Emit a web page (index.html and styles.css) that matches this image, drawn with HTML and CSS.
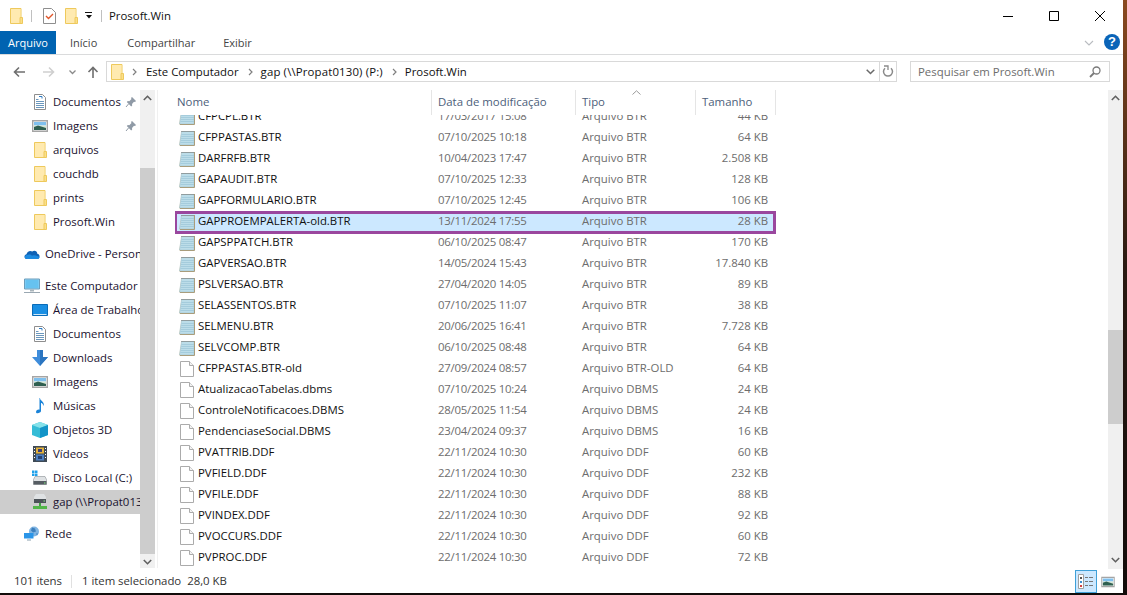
FILE: index.html
```html
<!DOCTYPE html>
<html lang="pt-BR">
<head>
<meta charset="utf-8">
<title>Prosoft.Win</title>
<link rel="stylesheet" href="styles.css">
</head>
<body>
<svg class="defs" width="0" height="0" aria-hidden="true">
  <symbol id="folder" viewBox="0 0 16 16"><path d="M2.500.5h10.500v15H2.500z" fill="#ffe69a" stroke="#eec95c"/><path d="M3 1h9.500v14H3z" fill="#ffeab0"/><path d="M12 9.500h2.500v6H12z" fill="#fbdf88" stroke="#eec95c"/></symbol>
  <symbol id="doc" viewBox="0 0 16 16"><path d="M2.500.5h8l3 3v12h-11z" fill="#fff" stroke="#8e8e8e"/><path d="M4 5.500h2.500M4 7.500h8M4 9.500h8M4 11.500h8M4 13.500h8" stroke="#6a97bd"/><path d="M7 2.500h3v2" fill="none" stroke="#2f7cc4"/></symbol>
  <symbol id="pics" viewBox="0 0 16 14"><path d="M.7 1.700h14.600v10.600H.7z" fill="#fff" stroke="#a5a5a5" stroke-width="1.400"/><path d="M2 3h12v3.500H2z" fill="#7fc0ee"/><path d="M2 6.500h12V11H2z" fill="#d5e6d4"/><path d="M2 8l4-1.500 8 2.500V11H2z" fill="#2f5f50"/></symbol>
  <symbol id="pin" viewBox="0 0 12 12"><path d="M7 1l4 4-1 1-1-.2L7 8l.2 1.500-1 1L1.800 6l1-1 1.500.2L6.500 3 6 2z" fill="#8f9aa6"/><path d="M3.500 8L1 11" stroke="#8f9aa6"/></symbol>
  <symbol id="cloud" viewBox="0 0 16 11"><path d="M3 10.500c-3 0-3.500-4-.5-4.700C3 3 6 1.500 8.300 3c2-1.500 5-.5 5 2.200 3 .3 3 5.300 0 5.300z" fill="#0f62b5"/><path d="M3 10.500c-3 0-3-3.500 0-4 2-1 4-.5 5 .8 2-.7 3.500-.5 5 .2 3 0 3 3 .5 3z" fill="#1c8ae0"/></symbol>
  <symbol id="pc" viewBox="0 0 16 15"><path d="M.5.500h15v10H.5z" fill="#8ed3f7" stroke="#6b9dbb"/><path d="M1.500 1.500h13v8h-13z" fill="#66c2f0"/><path d="M6 11h4v2H6z" fill="#a9b4bb"/><path d="M0 13.500h16v1H0z" fill="#9aa8b2"/></symbol>
  <symbol id="desk" viewBox="0 0 16 12"><path d="M.5.500h15v11H.5z" fill="#1a8fe3" stroke="#0a6cb8"/><path d="M1.500 10.500h13" stroke="#cfe8f8"/></symbol>
  <symbol id="down" viewBox="0 0 16 16"><path d="M5 0h6v7h5l-8 9-8-9h5z" fill="#3f8ddb"/><path d="M8 0h3v7h5l-8 9z" fill="#2b75c0"/></symbol>
  <symbol id="music" viewBox="0 0 12 16"><path d="M6 0c0 3 5 3.500 3.500 8C9 5.500 7.500 5 7 5v8c0 2-5 3.500-5 1 0-2 2.500-2.800 3.500-2.300V0z" fill="#1a83d8"/></symbol>
  <symbol id="cube" viewBox="0 0 16 16"><path d="M8 0l8 3v10l-8 3-8-3V3z" fill="#35bcd6"/><path d="M8 0l8 3-8 3-8-3z" fill="#86e2ea"/><path d="M8 6l8-3v10l-8 3z" fill="#1294c8"/></symbol>
  <symbol id="film" viewBox="0 0 14 16"><path d="M0 0h14v16H0z" fill="#3f4a55"/><path d="M3 1.500h8v6H3z" fill="#e3b23c"/><path d="M3 8.500h8v6H3z" fill="#4d7fc0"/><path d="M5 3h4v3H5z" fill="#3a3f78"/><path d="M5 10h4v3H5z" fill="#23406f"/><path d="M1 2h1v1H1zM1 5h1v1H1zM1 8h1v1H1zM1 11h1v1H1zM12 2h1v1h-1zM12 5h1v1h-1zM12 8h1v1h-1zM12 11h1v1h-1z" fill="#fff"/></symbol>
  <symbol id="disk" viewBox="0 0 16 15"><path d="M1.500 9L3 6h10l1.500 3v5h-13z" fill="#dfe2e4" stroke="#8a9096" stroke-width=".6"/><path d="M1.500 10.500h13V14h-13z" fill="#565d63"/><path d="M12 12h1.500v1H12z" fill="#7fe37f"/><path d="M0 0h2.500v2.500H0zM3 0h2.500v2.500H3zM0 3h2.500v2.500H0zM3 3h2.500v2.500H3z" fill="#1fa0ea"/></symbol>
  <symbol id="net" viewBox="0 0 16 16"><path d="M2 3l2-3h8l2 3v6H2z" fill="#dfe2e4"/><path d="M2 5h12v4H2z" fill="#4c5358"/><path d="M11.500 6.500H13v1h-1.500z" fill="#7fe37f"/><path d="M7 9h2v3H7z" fill="#3fa640"/><path d="M1 12h14v3H1z" fill="#52b648"/></symbol>
  <symbol id="globe" viewBox="0 0 16 15"><circle cx="10" cy="5" r="5" fill="#7fb4e2"/><path d="M8 1l3 1 1 3-3 1-2-2zM12 7l2 0-1 2z" fill="#3d7fbd"/><path d="M0 6.500h9.500V12H0z" fill="#2a95e8"/><path d="M3 13.500h4" stroke="#8aa0ae"/></symbol>
  <symbol id="btr" viewBox="0 0 16 16"><path d="M2.500 1.500h13V15.500H0z" fill="#e8d9b8"/><path d="M2.500 1.500H15V15H.5z" fill="#bcdde9" stroke="#9dbcc8" stroke-width=".5"/><path d="M2.500 4.500H15M2.200 6.500H15M2 8.500H15M1.800 10.500H15M1.500 12.500H15" stroke="#9fc8d8" stroke-width=".8"/><path d="M2.500 1.500h12.500" stroke="#666" stroke-dasharray="1 1"/><path d="M15.500 1v14.500H1" fill="none" stroke="#a99d7c"/></symbol>
  <symbol id="blank" viewBox="0 0 14 16"><path d="M.5.500h9l4 4v11H.5z" fill="#fff" stroke="#ababab"/><path d="M9.500.500v4h4" fill="#f3f3f3" stroke="#ababab"/></symbol>
</svg>
<div class="window">
  <header class="titlebar">
    <svg class="ic16 qa-first"><use href="#folder"/></svg>
    <span class="qa-sep"></span>
    <svg class="qa-check" viewBox="0 0 13 16"><path d="M.5.500h8l4 4v11H.5z" fill="#fff" stroke="#8e8e8e"/><path d="M3 8l2.500 2.500L10 6" fill="none" stroke="#e0562a" stroke-width="1.400"/></svg>
    <svg class="ic16 qa-folder"><use href="#folder"/></svg>
    <svg class="qa-down" viewBox="0 0 8 7"><path d="M0 0h7v1H0z" fill="#111"/><path d="M1 3h6L4 6.500z" fill="#111"/></svg>
    <span class="qa-sep"></span>
    <span class="title">Prosoft.Win</span>
    <div class="caption">
      <span class="cap-btn"><svg width="10" height="10" viewBox="0 0 10 10"><path d="M0 5.500h10" stroke="#000"/></svg></span>
      <span class="cap-btn"><svg width="10" height="10" viewBox="0 0 10 10"><path d="M.5.500h9v9h-9z" fill="none" stroke="#000"/></svg></span>
      <span class="cap-btn"><svg width="10" height="10" viewBox="0 0 10 10"><path d="M0 0l10 10M10 0L0 10" stroke="#000"/></svg></span>
    </div>
  </header>
  <nav class="ribbon">
    <span class="tab tab-file">Arquivo</span>
    <span class="tab tab-inicio">Início</span>
    <span class="tab tab-comp">Compartilhar</span>
    <span class="tab tab-exibir">Exibir</span>
    <svg class="rib-chev" viewBox="0 0 10 6"><path d="M1 1l4 4 4-4" fill="none" stroke="#b9bcc0" stroke-width="1.100"/></svg>
    <span class="help">?</span>
  </nav>
  <div class="addressbar">
    <svg class="nav-arrow back" viewBox="0 0 12 12"><path d="M12 6H2M6 1.500L1.500 6 6 10.500" fill="none" stroke="#6f6f6f" stroke-width="1.600"/></svg>
    <svg class="nav-arrow fwd" viewBox="0 0 12 12"><path d="M0 6h10M6 1.500L10.500 6 6 10.500" fill="none" stroke="#cfcfcf" stroke-width="1.600"/></svg>
    <svg class="nav-chev" viewBox="0 0 7 5"><path d="M.5.500L3.500 3.500 6.500.5" fill="none" stroke="#8a8a8a" stroke-width="1.300"/></svg>
    <svg class="nav-arrow up" viewBox="0 0 12 12"><path d="M6 12V2M1.500 6L6 1.500 10.500 6" fill="none" stroke="#6f6f6f" stroke-width="1.600"/></svg>
    <div class="path">
      <svg class="ic16 path-folder"><use href="#folder"/></svg>
      <svg class="crumb-sep first-sep" viewBox="0 0 5 8"><path d="M1 1l3 3-3 3" fill="none" stroke="#808080" stroke-width="1.200"/></svg>
      <span class="crumb">Este Computador</span>
      <svg class="crumb-sep" viewBox="0 0 5 8"><path d="M1 1l3 3-3 3" fill="none" stroke="#808080" stroke-width="1.200"/></svg>
      <span class="crumb crumb-gap">gap (\\Propat0130) (P:)</span>
      <svg class="crumb-sep" viewBox="0 0 5 8"><path d="M1 1l3 3-3 3" fill="none" stroke="#808080" stroke-width="1.200"/></svg>
      <span class="crumb">Prosoft.Win</span>
      <svg class="path-drop" viewBox="0 0 9 6"><path d="M.7.700L4.500 4.500 8.300.7" fill="none" stroke="#6a6a6a" stroke-width="1.500"/></svg>
      <span class="refresh"><svg width="12" height="13" viewBox="0 0 12 13"><path d="M9 3.200A4.500 4.500 0 1 1 3 3.200" fill="none" stroke="#8a8a8a" stroke-width="1.500"/><path d="M2 1h4v4" fill="none" stroke="#8a8a8a" stroke-width="1.300"/></svg></span>
    </div>
    <div class="search">
      <span class="search-text">Pesquisar em Prosoft.Win</span>
      <svg class="search-ic" viewBox="0 0 12 12"><circle cx="7.500" cy="4.500" r="3.500" fill="none" stroke="#7a7a7a" stroke-width="1.300"/><path d="M5 7l-4 4" stroke="#7a7a7a" stroke-width="1.800"/></svg>
    </div>
  </div>
  <div class="content">
    <aside class="sidebar">
      <ul class="tree">
        <li class="node child"><svg class="ic16"><use href="#doc"/></svg><span class="label">Documentos</span><svg class="pin"><use href="#pin"/></svg></li>
        <li class="node child"><svg class="ic16"><use href="#pics"/></svg><span class="label">Imagens</span><svg class="pin"><use href="#pin"/></svg></li>
        <li class="node child"><svg class="ic16"><use href="#folder"/></svg><span class="label">arquivos</span></li>
        <li class="node child"><svg class="ic16"><use href="#folder"/></svg><span class="label">couchdb</span></li>
        <li class="node child"><svg class="ic16"><use href="#folder"/></svg><span class="label">prints</span></li>
        <li class="node child"><svg class="ic16"><use href="#folder"/></svg><span class="label">Prosoft.Win</span></li>
      </ul>
      <ul class="tree">
        <li class="node root"><svg class="ic16"><use href="#cloud"/></svg><span class="label">OneDrive - Personal</span></li>
      </ul>
      <ul class="tree">
        <li class="node root"><svg class="ic16"><use href="#pc"/></svg><span class="label">Este Computador</span></li>
        <li class="node child"><svg class="ic16"><use href="#desk"/></svg><span class="label">Área de Trabalho</span></li>
        <li class="node child"><svg class="ic16"><use href="#doc"/></svg><span class="label">Documentos</span></li>
        <li class="node child"><svg class="ic16"><use href="#down"/></svg><span class="label">Downloads</span></li>
        <li class="node child"><svg class="ic16"><use href="#pics"/></svg><span class="label">Imagens</span></li>
        <li class="node child"><svg class="ic16"><use href="#music"/></svg><span class="label">Músicas</span></li>
        <li class="node child"><svg class="ic16"><use href="#cube"/></svg><span class="label">Objetos 3D</span></li>
        <li class="node child"><svg class="ic16"><use href="#film"/></svg><span class="label">Vídeos</span></li>
        <li class="node child"><svg class="ic16"><use href="#disk"/></svg><span class="label">Disco Local (C:)</span></li>
        <li class="node child current"><svg class="ic16"><use href="#net"/></svg><span class="label">gap (\\Propat0130) (P:)</span></li>
      </ul>
      <ul class="tree">
        <li class="node root"><svg class="ic16"><use href="#globe"/></svg><span class="label">Rede</span></li>
      </ul>
    </aside>
    <div class="scrollbar side-scroll">
      <svg class="sb-arrow" viewBox="0 0 9 6"><path d="M.8 5L4.500 1.300 8.200 5" fill="none" stroke="#606060" stroke-width="1.600"/></svg>
      <div class="sb-track side-track"><div class="sb-thumb"></div></div>
      <svg class="sb-arrow" viewBox="0 0 9 6"><path d="M.8 1L4.500 4.700 8.200 1" fill="none" stroke="#606060" stroke-width="1.600"/></svg>
    </div>
    <div class="pane-divider"></div>
    <main class="files">
      <div class="head">
        <span class="hcell">Nome</span>
        <span class="hcell">Data de modificação</span>
        <span class="hcell sorted">Tipo<svg class="sort" viewBox="0 0 9 5"><path d="M.5 4.500L4.500.8 8.500 4.500" fill="none" stroke="#9a9a9a"/></svg></span>
        <span class="hcell">Tamanho</span>
      </div>
      <div class="list">
        <div class="rows">
          <div class="row"><span class="name"><svg class="ic16"><use href="#btr"/></svg>CFPCPL.BTR</span><span class="date">17/03/2017 15:08</span><span>Arquivo BTR</span><span class="size">44 KB</span></div>
          <div class="row"><span class="name"><svg class="ic16"><use href="#btr"/></svg>CFPPASTAS.BTR</span><span class="date">07/10/2025 10:18</span><span>Arquivo BTR</span><span class="size">64 KB</span></div>
          <div class="row"><span class="name"><svg class="ic16"><use href="#btr"/></svg>DARFRFB.BTR</span><span class="date">10/04/2023 17:47</span><span>Arquivo BTR</span><span class="size">2.508 KB</span></div>
          <div class="row"><span class="name"><svg class="ic16"><use href="#btr"/></svg>GAPAUDIT.BTR</span><span class="date">07/10/2025 12:33</span><span>Arquivo BTR</span><span class="size">128 KB</span></div>
          <div class="row"><span class="name"><svg class="ic16"><use href="#btr"/></svg>GAPFORMULARIO.BTR</span><span class="date">07/10/2025 12:45</span><span>Arquivo BTR</span><span class="size">106 KB</span></div>
          <div class="row selected"><span class="name"><svg class="ic16"><use href="#btr"/></svg>GAPPROEMPALERTA-old.BTR</span><span class="date">13/11/2024 17:55</span><span>Arquivo BTR</span><span class="size">28 KB</span></div>
          <div class="row"><span class="name"><svg class="ic16"><use href="#btr"/></svg>GAPSPPATCH.BTR</span><span class="date">06/10/2025 08:47</span><span>Arquivo BTR</span><span class="size">170 KB</span></div>
          <div class="row"><span class="name"><svg class="ic16"><use href="#btr"/></svg>GAPVERSAO.BTR</span><span class="date">14/05/2024 15:43</span><span>Arquivo BTR</span><span class="size">17.840 KB</span></div>
          <div class="row"><span class="name"><svg class="ic16"><use href="#btr"/></svg>PSLVERSAO.BTR</span><span class="date">27/04/2020 14:05</span><span>Arquivo BTR</span><span class="size">89 KB</span></div>
          <div class="row"><span class="name"><svg class="ic16"><use href="#btr"/></svg>SELASSENTOS.BTR</span><span class="date">07/10/2025 11:07</span><span>Arquivo BTR</span><span class="size">38 KB</span></div>
          <div class="row"><span class="name"><svg class="ic16"><use href="#btr"/></svg>SELMENU.BTR</span><span class="date">20/06/2025 16:41</span><span>Arquivo BTR</span><span class="size">7.728 KB</span></div>
          <div class="row"><span class="name"><svg class="ic16"><use href="#btr"/></svg>SELVCOMP.BTR</span><span class="date">06/10/2025 08:48</span><span>Arquivo BTR</span><span class="size">64 KB</span></div>
          <div class="row"><span class="name"><svg class="ic16"><use href="#blank"/></svg>CFPPASTAS.BTR-old</span><span class="date">27/09/2024 08:57</span><span>Arquivo BTR-OLD</span><span class="size">64 KB</span></div>
          <div class="row"><span class="name"><svg class="ic16"><use href="#blank"/></svg>AtualizacaoTabelas.dbms</span><span class="date">07/10/2025 10:24</span><span>Arquivo DBMS</span><span class="size">24 KB</span></div>
          <div class="row"><span class="name"><svg class="ic16"><use href="#blank"/></svg>ControleNotificacoes.DBMS</span><span class="date">28/05/2025 11:54</span><span>Arquivo DBMS</span><span class="size">24 KB</span></div>
          <div class="row"><span class="name"><svg class="ic16"><use href="#blank"/></svg>PendenciaseSocial.DBMS</span><span class="date">23/04/2024 09:37</span><span>Arquivo DBMS</span><span class="size">16 KB</span></div>
          <div class="row"><span class="name"><svg class="ic16"><use href="#blank"/></svg>PVATTRIB.DDF</span><span class="date">22/11/2024 10:30</span><span>Arquivo DDF</span><span class="size">60 KB</span></div>
          <div class="row"><span class="name"><svg class="ic16"><use href="#blank"/></svg>PVFIELD.DDF</span><span class="date">22/11/2024 10:30</span><span>Arquivo DDF</span><span class="size">232 KB</span></div>
          <div class="row"><span class="name"><svg class="ic16"><use href="#blank"/></svg>PVFILE.DDF</span><span class="date">22/11/2024 10:30</span><span>Arquivo DDF</span><span class="size">88 KB</span></div>
          <div class="row"><span class="name"><svg class="ic16"><use href="#blank"/></svg>PVINDEX.DDF</span><span class="date">22/11/2024 10:30</span><span>Arquivo DDF</span><span class="size">92 KB</span></div>
          <div class="row"><span class="name"><svg class="ic16"><use href="#blank"/></svg>PVOCCURS.DDF</span><span class="date">22/11/2024 10:30</span><span>Arquivo DDF</span><span class="size">60 KB</span></div>
          <div class="row"><span class="name"><svg class="ic16"><use href="#blank"/></svg>PVPROC.DDF</span><span class="date">22/11/2024 10:30</span><span>Arquivo DDF</span><span class="size">72 KB</span></div>
        </div>
      </div>
    </main>
    <div class="scrollbar main-scroll">
      <svg class="sb-arrow" viewBox="0 0 9 6"><path d="M.8 5L4.500 1.300 8.200 5" fill="none" stroke="#606060" stroke-width="1.600"/></svg>
      <div class="sb-track main-track"><div class="sb-thumb"></div></div>
      <svg class="sb-arrow" viewBox="0 0 9 6"><path d="M.8 1L4.500 4.700 8.200 1" fill="none" stroke="#606060" stroke-width="1.600"/></svg>
    </div>
  </div>
  <footer class="status">
    <span class="st-text st-count">101 itens</span>
    <span class="st-sep"></span>
    <span class="st-text st-sel">1 item selecionado</span>
    <span class="st-text st-size">28,0 KB</span>
    <div class="views">
      <span class="view view-on"><svg width="16" height="15" viewBox="0 0 16 15"><path d="M.5.500h5v14h-5z" fill="#fff" stroke="#a0a0a0"/><path d="M2 3h2v2H2z" fill="#555"/><path d="M2 7h2v2H2z" fill="#3a8fd0"/><path d="M2 11h2v2H2z" fill="#d04040"/><path d="M7 3.500h3M11 3.500h4M7 7.500h3M11 7.500h4M7 11.500h3M11 11.500h4" stroke="#777"/></svg></span>
      <span class="view"><svg width="14" height="12" viewBox="0 0 16 14"><use href="#pics"/></svg></span>
    </div>
  </footer>
</div>
</body>
</html>
```

FILE: styles.css
```css
* { box-sizing: border-box; }
html, body { margin: 0; height: 100%; }
body {
  overflow: hidden;
  background: linear-gradient(#8a4a20, #2a1a12 45%, #120c0a);
  font-family: "Open Sans", "Noto Sans", "Liberation Sans", sans-serif;
  font-size: 11.400px;
  color: #000;
}
.defs { position: absolute; }
ul { list-style: none; margin: 0; padding: 0; }
svg { display: block; flex: none; }
.ic16 { width: 16px; height: 16px; }

.window { width: 1123px; height: 593px; background: #fff; display: flex; flex-direction: column; }

.titlebar { height: 31px; display: flex; align-items: center; padding-left: 8px; }
.qa-first { margin-right: 7px; }
.qa-sep { width: 1px; height: 12px; background: #c0c0c0; }
.qa-check { width: 13px; height: 16px; margin-left: 11px; }
.qa-folder { margin-left: 7px; }
.qa-down { width: 8px; height: 7px; margin: 0 8px 0 6px; }
.title { margin-left: 7px; color: #111; }
.caption { margin-left: auto; display: flex; }
.cap-btn { width: 46px; height: 31px; display: flex; align-items: center; justify-content: center; }

.ribbon { height: 24px; display: flex; align-items: stretch; border-bottom: 1px solid #dadbdc; font-size: 11px; color: #444; }
.tab { display: flex; align-items: center; justify-content: center; }
.tab-file { width: 56px; background: #0063b1; color: #fff; }
.tab-inicio { margin-left: 14px; }
.tab-comp { margin-left: 30px; }
.tab-exibir { margin-left: 28px; }
.rib-chev { width: 10px; height: 6px; margin: 9px 10px 0 auto; }
.help { width: 16px; height: 16px; margin: 3px 3px 0 0; border-radius: 50%; background: #0a64b8; color: #fff; font-family: "Liberation Sans", sans-serif; font-weight: 700; font-size: 13px; line-height: 16px; text-align: center; }

.addressbar { height: 35px; display: flex; align-items: flex-start; padding-top: 6px; }
.nav-arrow { width: 12px; height: 12px; margin-top: 5px; }
.back { margin-left: 13px; }
.fwd { margin-left: 18px; }
.nav-chev { width: 7px; height: 5px; margin: 9px 0 0 14px; }
.up { margin-left: 11px; }
.path { width: 791px; height: 21px; margin-left: 7px; border: 1px solid #d9d9d9; display: flex; align-items: center; padding-left: 2px; color: #111; }
.crumb-sep { width: 5px; height: 8px; margin: 0 8px 0 9px; }
.first-sep { margin-left: 7px; margin-right: 9px; }
.crumb-gap { letter-spacing: .15px; }
.path-drop { width: 9px; height: 6px; margin-left: auto; margin-right: 4px; }
.refresh { width: 17px; height: 19px; border-left: 1px solid #d9d9d9; display: flex; align-items: center; justify-content: center; }
.search { width: 200px; height: 21px; margin-left: 13px; border: 1px solid #d9d9d9; display: flex; align-items: center; padding: 0 7px; color: #6d6d6d; }
.search-ic { width: 12px; height: 12px; margin-left: auto; margin-right: 1px; }

.content { flex: 1; min-height: 0; display: flex; }
.sidebar { width: 140px; overflow: hidden; flex: none; }
.tree { margin-bottom: 8px; }
.node { height: 24px; display: flex; align-items: center; white-space: nowrap; color: #1a1230; }
.node.child { padding-left: 32px; }
.node.root { padding-left: 24px; }
.label { margin-left: 5px; padding-bottom: 2px; }
.pin { width: 12px; height: 12px; margin-left: auto; margin-right: 3px; }
.current { background: #cdcdcd; }

.scrollbar { width: 15px; flex: none; background: #f0f0f0; display: flex; flex-direction: column; align-items: center; }
.side-scroll { height: 478px; }
.main-scroll { height: 479px; }
.sb-arrow { width: 9px; height: 6px; margin: 5px 0 6px; }
.sb-track { flex: 1; width: 100%; display: flex; flex-direction: column; }
.sb-thumb { width: 100%; background: #cdcdcd; }
.side-track { padding-top: 61px; }
.side-track .sb-thumb { height: 386px; }
.main-track { padding-top: 223px; }
.main-track .sb-thumb { height: 94px; }
.pane-divider { width: 1px; margin: 0 2px 25px; background: #f0f0f0; height: 478px; flex: none; }

.files { flex: 1; min-width: 0; display: flex; flex-direction: column; height: 480px; padding-left: 15px; }
.head { height: 25px; flex: none; display: grid; grid-template-columns: 257px 144px 120px 80px; color: #4c607a; }
.hcell { position: relative; padding-left: 2px; padding-top: 4px; border-right: 1px solid #e5e5e5; height: 25px; white-space: nowrap; }
.hcell + .hcell { padding-left: 6px; }
.sort { position: absolute; left: 56px; top: 0; width: 9px; height: 5px; }
.list { flex: 1; min-height: 0; overflow: hidden; }
.rows { margin-top: -8px; }
.row { height: 21px; width: 600px; display: grid; grid-template-columns: 257px 144px 120px 79px; align-items: start; color: #6d6d6d; white-space: nowrap; }
.row > span { padding-left: 6px; line-height: 18px; }
.row > .name { display: flex; align-items: center; gap: 3px; padding-left: 4px; color: #111; height: 18px; }
.name > svg { margin-top: 2px; }
.row > .date { letter-spacing: -.25px; }
.row > .size { text-align: right; padding-right: 7px; }
.selected { background: #cce8ff; outline: 3px solid #9a479e; outline-offset: -2px; }

.status { height: 23px; display: flex; align-items: center; padding-left: 14px; color: #333; }
.st-text { margin-bottom: 2px; letter-spacing: -.03px; }
.st-sep { width: 1px; height: 13px; background: #e0e0e0; margin: 0 10px 0 9px; }
.st-size { margin-left: 6px; }
.views { margin-left: auto; display: flex; align-items: center; margin-right: 4px; }
.view { width: 22px; height: 23px; display: flex; align-items: center; justify-content: center; }
.view-on { background: #cce8ff; border: 1px solid #3fa0d8; }
```
